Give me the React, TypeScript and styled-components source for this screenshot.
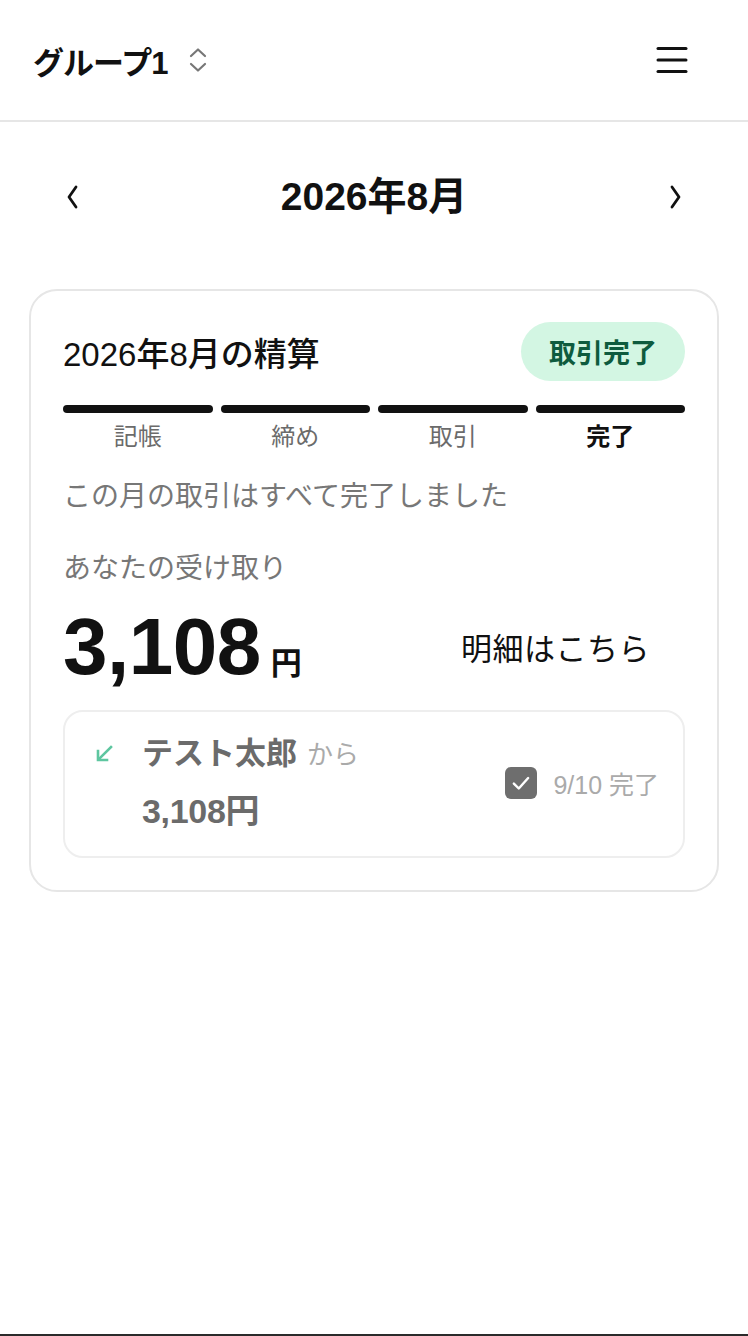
import React from "react";
import styled, { createGlobalStyle } from "styled-components";

const GlobalStyle = createGlobalStyle`
  html, body { margin: 0; padding: 0; background: #ffffff; }
  body {
    font-family: "Liberation Sans", "Noto Sans CJK JP", sans-serif;
    color: #111111;
    -webkit-font-smoothing: antialiased;
  }
  * { box-sizing: border-box; }
`;

const Page = styled.div`
  min-height: 1334px;
  display: flex;
  flex-direction: column;
  background: #ffffff;
`;

const BottomEdge = styled.div`
  height: 2px;
  background: #2b2b2b;
`;

const Header = styled.header`
  height: 122px;
  border-bottom: 2px solid #e6e6e6;
  display: flex;
  align-items: center;
  justify-content: space-between;
  padding: 0 60px 0 33px;
`;

const GroupSwitch = styled.div`
  display: flex;
  align-items: center;
  gap: 21px;
`;

const GroupName = styled.span`
  font-size: 31px;
  font-weight: 700;
  letter-spacing: -1px;
`;

const IconButton = styled.button`
  border: none;
  background: transparent;
  padding: 0;
  display: flex;
  align-items: center;
  justify-content: center;
  color: #111111;
`;

const Main = styled.main`
  padding: 0 29px;
  display: flex;
  flex-direction: column;
`;

const MonthNav = styled.nav`
  height: 150px;
  display: flex;
  align-items: center;
  justify-content: space-between;
  padding: 0 36px 0 36px;
`;

const MonthTitle = styled.h1`
  margin: 0;
  font-size: 39px;
  line-height: 44px;
  font-weight: 700;
`;

const Card = styled.section`
  margin-top: 17px;
  border: 2px solid #e6e6e6;
  border-radius: 28px;
  padding: 31px 32px 32px 32px;
  display: flex;
  flex-direction: column;
`;

const CardHead = styled.div`
  display: flex;
  align-items: center;
  justify-content: space-between;
`;

const CardTitle = styled.h2`
  margin: 0;
  font-size: 33px;
  font-weight: 500;
`;

const Badge = styled.span`
  height: 59px;
  padding: 0 28px;
  border-radius: 30px;
  background: #d3f6e3;
  color: #0e5b3e;
  font-size: 27px;
  font-weight: 700;
  display: flex;
  align-items: center;
`;

const Steps = styled.div`
  margin-top: 24px;
  display: grid;
  grid-template-columns: repeat(4, 1fr);
  column-gap: 8px;
`;

const Step = styled.div`
  display: flex;
  flex-direction: column;
  align-items: center;
`;

const StepBar = styled.div`
  width: 100%;
  height: 8px;
  border-radius: 4px;
  background: #111111;
`;

const StepLabel = styled.span<{ $current?: boolean }>`
  margin-top: 10px;
  font-size: 24px;
  line-height: 28px;
  font-weight: ${(p) => (p.$current ? 700 : 400)};
  color: ${(p) => (p.$current ? "#111111" : "#6b6b6b")};
`;

const Note = styled.p`
  margin: 28px 0 0;
  font-size: 28px;
  line-height: 36px;
  color: #777777;
`;

const ReceiveLabel = styled.p`
  margin: 36px 0 0;
  font-size: 28px;
  line-height: 36px;
  color: #777777;
`;

const AmountRow = styled.div`
  margin-top: 22px;
  display: flex;
  align-items: flex-end;
  justify-content: space-between;
`;

const Amount = styled.div`
  display: flex;
  align-items: baseline;
  gap: 10px;
`;

const AmountValue = styled.span`
  font-size: 80px;
  line-height: 76px;
  font-weight: 700;
  letter-spacing: -0.5px;
`;

const AmountUnit = styled.span`
  font-size: 31px;
  font-weight: 700;
`;

const DetailLink = styled.a`
  font-size: 31px;
  color: #111111;
  text-decoration: none;
  margin-right: 35px;
  margin-bottom: 16px;
  letter-spacing: 0.5px;
`;

const Transfer = styled.div`
  margin-top: 25px;
  border: 2px solid #eeeeee;
  border-radius: 20px;
  padding: 22px 24px 25px 30px;
  display: grid;
  grid-template-columns: 47px 1fr auto;
  align-items: center;
`;

const ArrowCell = styled.div`
  align-self: start;
  padding-top: 10px;
  color: #5ec6a0;
`;

const TransferInfo = styled.div`
  display: flex;
  flex-direction: column;
  gap: 16px;
`;

const Person = styled.div`
  display: flex;
  align-items: baseline;
  gap: 10px;
  line-height: 40px;
`;

const PersonName = styled.span`
  font-size: 31px;
  font-weight: 700;
  color: #6b6b6b;
`;

const From = styled.span`
  font-size: 26px;
  color: #aaaaaa;
`;

const TransferAmount = styled.span`
  font-size: 34px;
  line-height: 40px;
  font-weight: 700;
  color: #6b6b6b;
  letter-spacing: -0.3px;
`;

const Status = styled.div`
  display: flex;
  align-items: center;
  gap: 16px;
`;

const CheckBox = styled.span`
  width: 32px;
  height: 32px;
  border-radius: 6px;
  background: #6e6e6e;
  display: flex;
  align-items: center;
  justify-content: center;
`;

const StatusText = styled.span`
  font-size: 25px;
  color: #aaaaaa;
`;

const steps = [
  { label: "記帳" },
  { label: "締め" },
  { label: "取引" },
  { label: "完了", current: true },
];

export default function App() {
  return (
    <>
      <GlobalStyle />
      <Page>
        <Header>
          <GroupSwitch>
            <GroupName>グループ1</GroupName>
            <svg width="20" height="26" viewBox="0 0 20 26" fill="none" stroke="#777" strokeWidth="2.2" strokeLinecap="round" strokeLinejoin="round">
              <path d="M3 9 L10 2.5 L17 9" />
              <path d="M3 17 L10 23.5 L17 17" />
            </svg>
          </GroupSwitch>
          <IconButton aria-label="menu">
            <svg width="32" height="28" viewBox="0 0 32 28" fill="none" stroke="#111" strokeWidth="3" strokeLinecap="round">
              <path d="M2 2.5 H30" />
              <path d="M2 14 H30" />
              <path d="M2 25.5 H30" />
            </svg>
          </IconButton>
        </Header>
        <Main>
          <MonthNav>
            <IconButton aria-label="prev">
              <svg width="16" height="26" viewBox="0 0 16 26" fill="none" stroke="#111" strokeWidth="2.8" strokeLinecap="round" strokeLinejoin="round">
                <path d="M11 3 L4 13 L11 23" />
              </svg>
            </IconButton>
            <MonthTitle>2026年8月</MonthTitle>
            <IconButton aria-label="next">
              <svg width="16" height="26" viewBox="0 0 16 26" fill="none" stroke="#111" strokeWidth="2.8" strokeLinecap="round" strokeLinejoin="round">
                <path d="M5 3 L12 13 L5 23" />
              </svg>
            </IconButton>
          </MonthNav>
          <Card>
            <CardHead>
              <CardTitle>2026年8月の精算</CardTitle>
              <Badge>取引完了</Badge>
            </CardHead>
            <Steps>
              {steps.map((s) => (
                <Step key={s.label}>
                  <StepBar />
                  <StepLabel $current={s.current}>{s.label}</StepLabel>
                </Step>
              ))}
            </Steps>
            <Note>この月の取引はすべて完了しました</Note>
            <ReceiveLabel>あなたの受け取り</ReceiveLabel>
            <AmountRow>
              <Amount>
                <AmountValue>3,108</AmountValue>
                <AmountUnit>円</AmountUnit>
              </Amount>
              <DetailLink href="#">明細はこちら</DetailLink>
            </AmountRow>
            <Transfer>
              <ArrowCell>
                <svg width="20" height="20" viewBox="0 0 20 20" fill="none" stroke="currentColor" strokeWidth="2.6" strokeLinecap="square">
                  <path d="M16 3 L4 15" />
                  <path d="M3 7 V16 H12" />
                </svg>
              </ArrowCell>
              <TransferInfo>
                <Person>
                  <PersonName>テスト太郎</PersonName>
                  <From>から</From>
                </Person>
                <TransferAmount>3,108円</TransferAmount>
              </TransferInfo>
              <Status>
                <CheckBox>
                  <svg width="22" height="22" viewBox="0 0 20 20" fill="none" stroke="#fff" strokeWidth="2.2" strokeLinecap="round" strokeLinejoin="round">
                    <path d="M3.5 10.5 L8 15 L16.5 5.5" />
                  </svg>
                </CheckBox>
                <StatusText>9/10 完了</StatusText>
              </Status>
            </Transfer>
          </Card>
        </Main>
      </Page>
      <BottomEdge />
    </>
  );
}
